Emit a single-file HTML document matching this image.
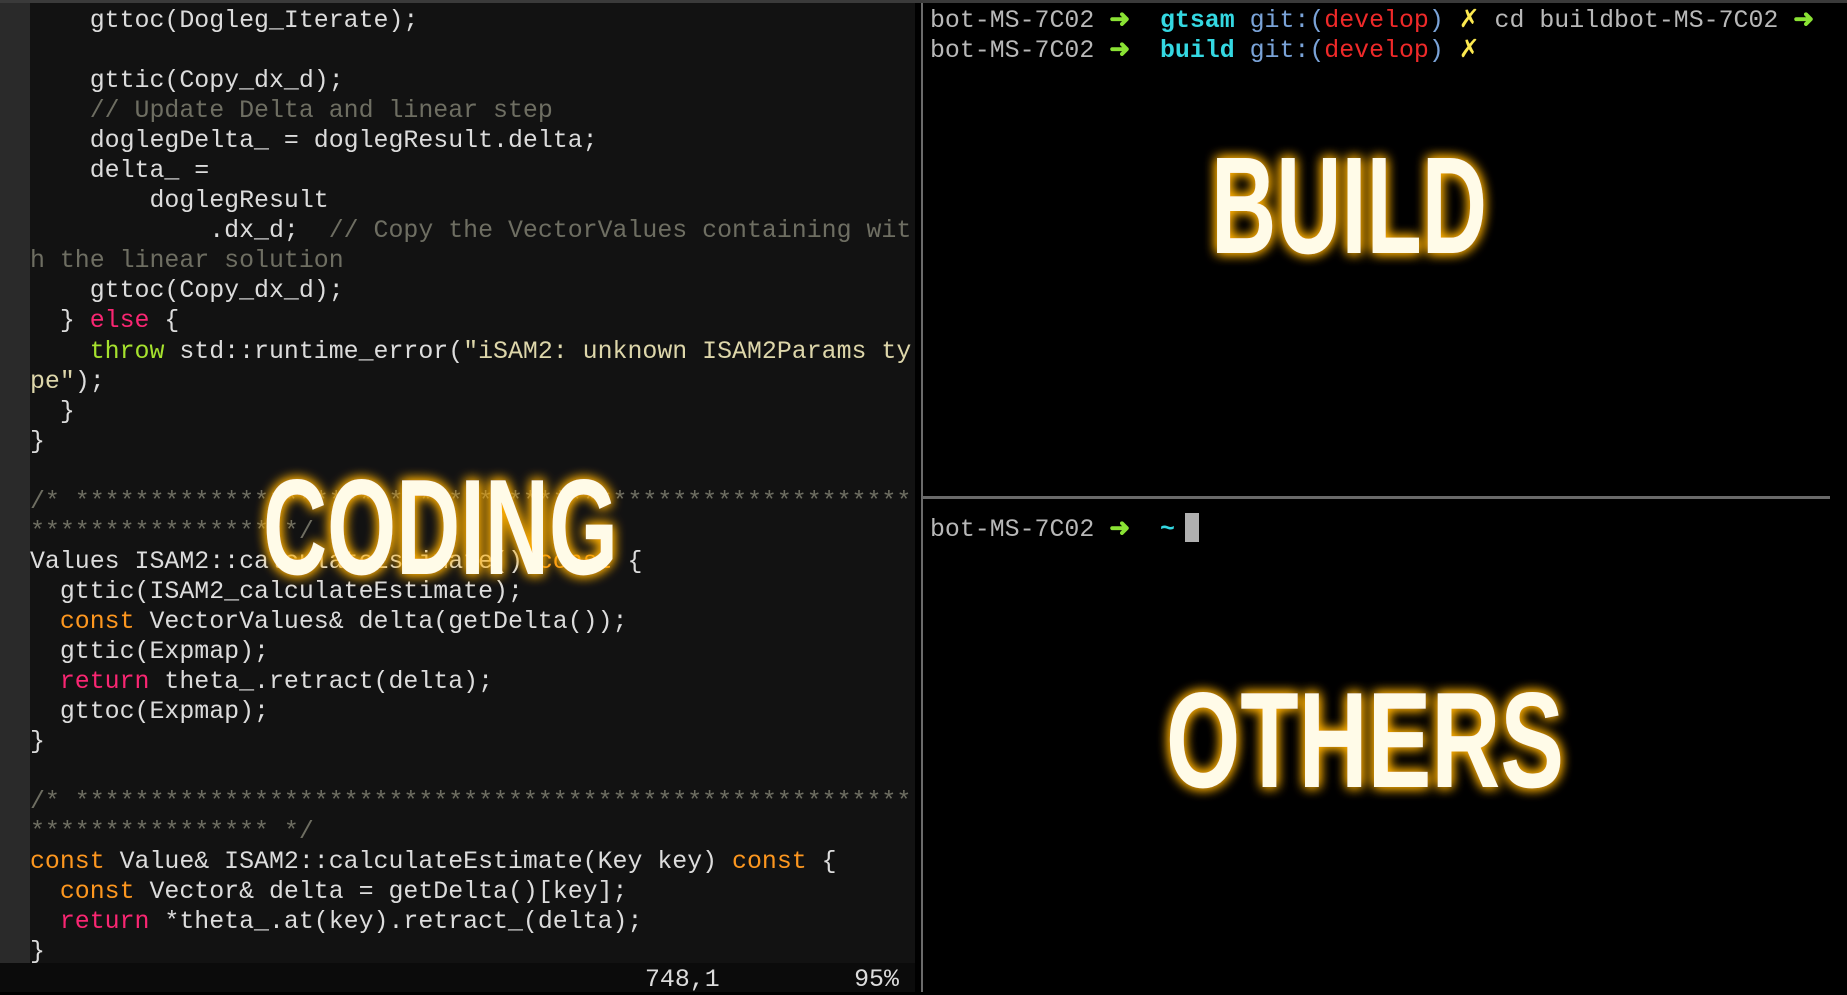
<!DOCTYPE html>
<html><head><meta charset="utf-8"><style>
*{margin:0;padding:0}
body{width:1847px;height:992px;background:#000;position:relative;overflow:hidden;font-family:"Liberation Mono",monospace}
#top{position:absolute;left:0;top:0;width:1847px;height:3px;background:#3a3a3a}
#gut{position:absolute;left:0;top:3px;width:30px;height:960px;background:#2a2a2a}
#code{position:absolute;left:30px;top:3px;width:885px;height:960px;background:#121212}
#status{position:absolute;left:0;top:963px;width:915px;height:29px;background:#0b0b0b}
pre{position:absolute;font-family:"Liberation Mono",monospace;font-size:24.9px;line-height:30.05px;color:#dcdcdc;white-space:pre}
.c{color:#6e6e62}.k{color:#f92672}.t{color:#a6e22e}.o{color:#fd971f}.s{color:#ddd6aa}
.g{color:#b8b8b8}.a{color:#8ae234;font-weight:bold}.cy{color:#34d8e2;font-weight:bold}.b{color:#7aa3d8}.r{color:#ef2929}.y{color:#fce94f}
#vl{position:absolute;left:921px;top:3px;width:2px;height:989px;background:#6a6a6a}
#hl{position:absolute;left:923px;top:496px;width:907px;height:3px;background:#6a6a6a}
#cur{position:absolute;left:1185px;top:513px;width:14px;height:29px;background:#b0b0b0}
svg{position:absolute;left:0;top:0}
</style></head><body>
<div id="top"></div><div id="gut"></div><div id="code"></div><div id="status"></div>
<pre style="left:30px;top:6px">    gttoc(Dogleg_Iterate);

    gttic(Copy_dx_d);
    <span class="c">// Update Delta and linear step</span>
    doglegDelta_ = doglegResult.delta;
    delta_ =
        doglegResult
            .dx_d;  <span class="c">// Copy the VectorValues containing wit</span>
<span class="c">h the linear solution</span>
    gttoc(Copy_dx_d);
  } <span class="k">else</span> {
    <span class="t">throw</span> std::runtime_error(<span class="s">"iSAM2: unknown ISAM2Params ty</span>
<span class="s">pe"</span>);
  }
}

<span class="c">/* ********************************************************</span>
<span class="c">**************** */</span>
Values ISAM2::calculateEstimate() <span class="o">const</span> {
  gttic(ISAM2_calculateEstimate);
  <span class="o">const</span> VectorValues&amp; delta(getDelta());
  gttic(Expmap);
  <span class="k">return</span> theta_.retract(delta);
  gttoc(Expmap);
}

<span class="c">/* ********************************************************</span>
<span class="c">**************** */</span>
<span class="o">const</span> Value&amp; ISAM2::calculateEstimate(Key key) <span class="o">const</span> {
  <span class="o">const</span> Vector&amp; delta = getDelta()[key];
  <span class="k">return</span> *theta_.at(key).retract_(delta);
}
</pre>
<pre style="left:645px;top:965px">748,1         95%</pre>
<div id="vl"></div><div id="hl"></div>
<pre style="left:930px;top:6px"><span class="g">bot-MS-7C02</span> <span class="a">➜</span>  <span class="cy">gtsam</span> <span class="b">git:(</span><span class="r">develop</span><span class="b">)</span> <span class="y">✗</span> <span class="g">cd buildbot-MS-7C02</span> <span class="a">➜</span>
<span class="g">bot-MS-7C02</span> <span class="a">➜</span>  <span class="cy">build</span> <span class="b">git:(</span><span class="r">develop</span><span class="b">)</span> <span class="y">✗</span></pre>
<pre style="left:930px;top:515px"><span class="g">bot-MS-7C02</span> <span class="a">➜</span>  <span class="cy">~</span></pre>
<div id="cur"></div>
<svg width="1847" height="992">
<defs><filter id="gl" x="-20%" y="-40%" width="140%" height="180%">
<feGaussianBlur in="SourceAlpha" stdDeviation="6" result="b"/>
<feFlood flood-color="#ffb000" result="f"/><feComposite in="f" in2="b" operator="in" result="g"/>
<feMerge><feMergeNode in="g"/><feMergeNode in="g"/><feMergeNode in="SourceGraphic"/></feMerge>
</filter></defs>
<g font-family="'Liberation Sans Narrow','Liberation Sans',sans-serif" font-weight="bold" fill="#fffbe8" filter="url(#gl)">
<text x="1211" y="253" font-size="138" textLength="276" lengthAdjust="spacingAndGlyphs">BUILD</text>
<text x="263" y="574" font-size="136" textLength="355" lengthAdjust="spacingAndGlyphs">CODING</text>
<text x="1166" y="787" font-size="136" textLength="398" lengthAdjust="spacingAndGlyphs">OTHERS</text>
</g></svg>
</body></html>
